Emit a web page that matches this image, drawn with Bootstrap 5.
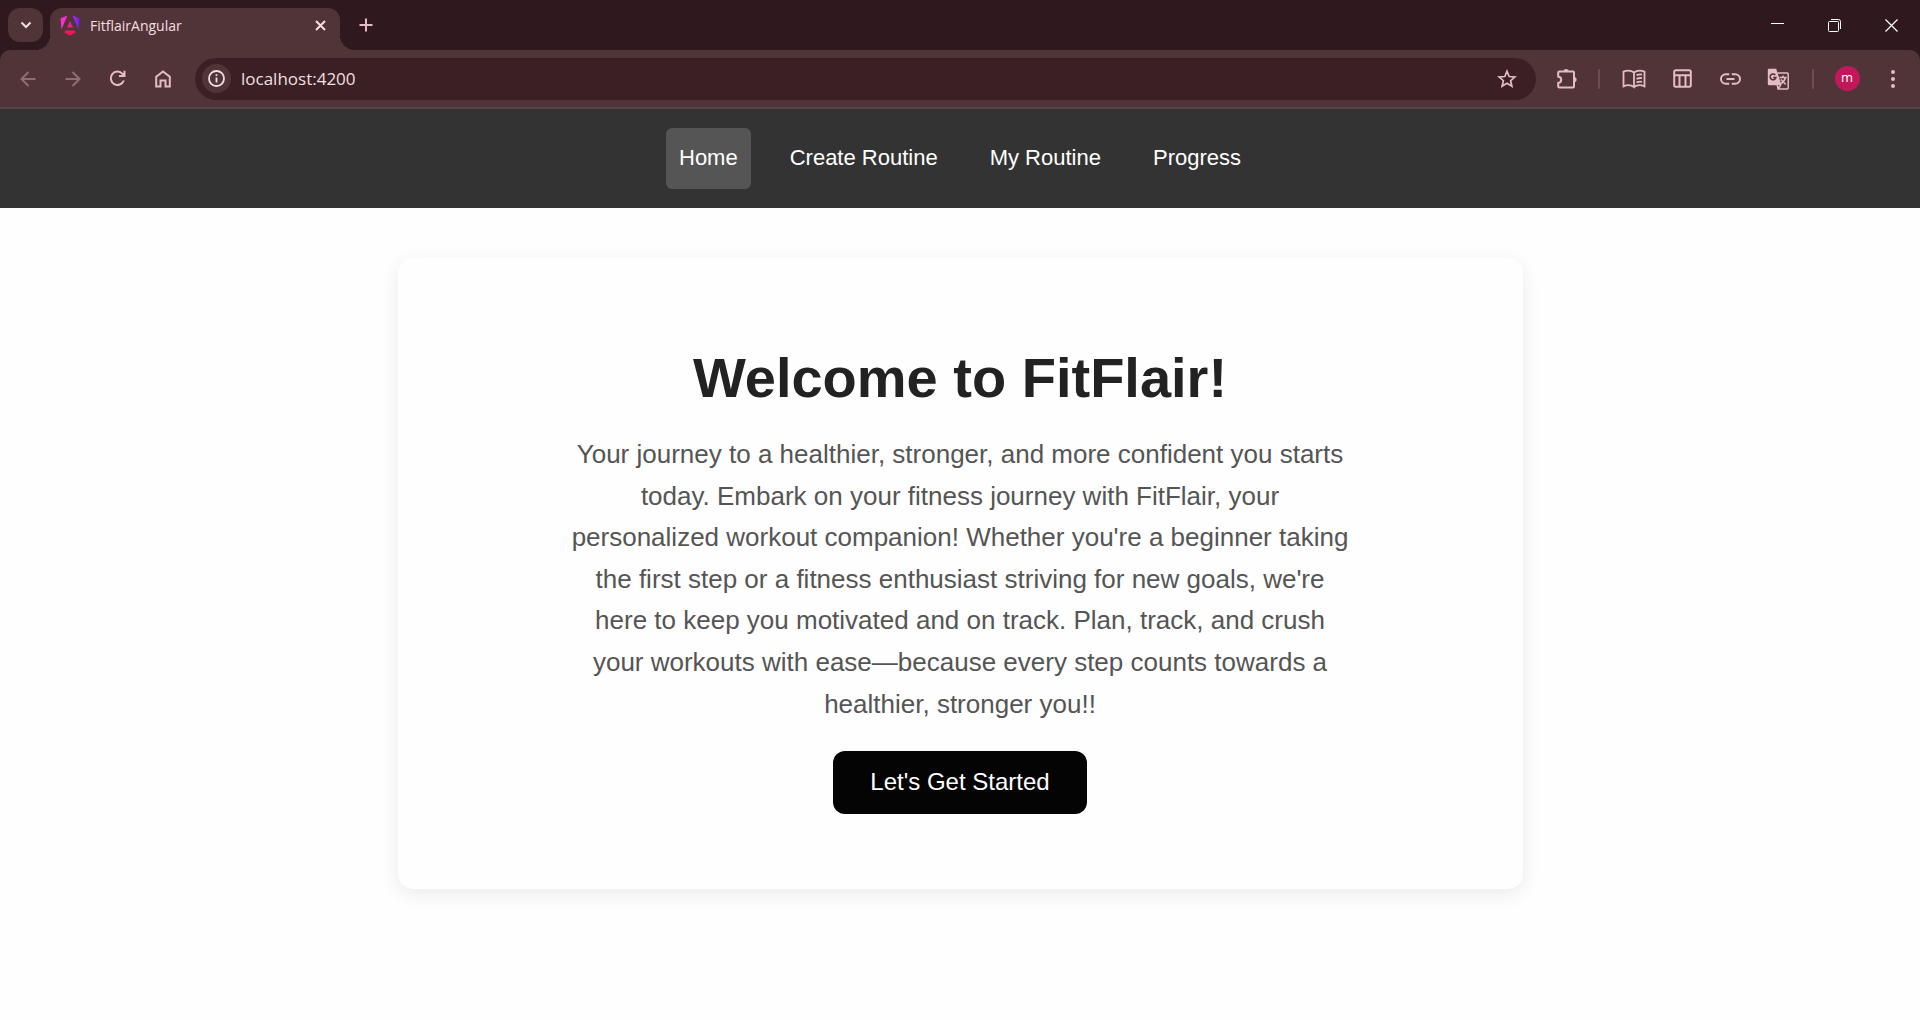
<!DOCTYPE html>
<html lang="en">
<head>
<meta charset="utf-8">
<meta name="viewport" content="width=device-width, initial-scale=1">
<title>FitflairAngular</title>
<link href="https://cdn.jsdelivr.net/npm/bootstrap@5.3.0/dist/css/bootstrap.min.css" rel="stylesheet">
<style>
  :root { --strip: #30191e; --bar: #513438; --field: #3a2024; --ink: #f3dfe1; --pink: #e6bcc2; }
  body { font-family: "Liberation Sans", Arial, sans-serif; background: #fefefe; }
  svg { display: block; fill: none; stroke: currentColor; stroke-width: 2; }
  .browser-ui { background: var(--strip); font-family: "Open Sans", "Noto Sans", sans-serif; color: var(--ink); }
  .icon-button { border: 0; padding: 0; background: transparent; color: var(--pink); display: flex; align-items: center; justify-content: center; flex: none; }
  .icon-button:disabled { color: #8f6d72; }
  .tab-strip { height: 50px; }
  .tab-search { width: 35px; height: 34px; border-radius: 12px; background: var(--bar); color: var(--ink); margin: 8px 7px 0 8px; }
  .browser-tab { position: relative; width: 290px; height: 42px; gap: 10px; margin-top: 8px; padding: 0 10px 8px; border-radius: 12px 12px 0 0; background: var(--bar); font-size: 14px; }
  .browser-tab::before, .browser-tab::after { content: ""; position: absolute; bottom: 0; width: 15px; height: 15px; }
  .browser-tab::before { right: 100%; background: radial-gradient(circle at 0 0, transparent 15px, var(--bar) 15px); }
  .browser-tab::after { left: 100%; background: radial-gradient(circle at 100% 0, transparent 15px, var(--bar) 15px); }
  .tab-close { width: 20px; height: 20px; color: var(--ink); }
  .new-tab { width: 32px; height: 50px; margin-left: 10px; }
  .window-button { width: 57px; height: 50px; color: #fff; }
  .tool-row { height: 59px; padding: 0 5px; background: var(--bar); border-radius: 10px 10px 0 0; border-bottom: 2px solid #554546; }
  .nav-tool { width: 45px; height: 42px; }
  .side-tool { width: 48px; height: 42px; }
  .ext-tool { width: 42px; height: 42px; }
  .profile-tool { width: 46px; height: 42px; }
  .address { height: 42px; margin: 0 10px; padding: 0 7px; border-radius: 21px; background: var(--field); }
  .site-info { width: 29px; height: 29px; border-radius: 50%; background: var(--bar); color: var(--ink); }
  .address input { border: 0; outline: 0; background: transparent; color: var(--ink); font-size: 17px; padding: 0; margin-left: 10px; min-width: 0; }
  .divider { width: 2px; height: 20px; background: #6e4c51; margin: 0 10px; border-radius: 1px; }
  .avatar { width: 25px; height: 25px; border-radius: 50%; background: #c2185b; color: #fff; font-size: 13px; line-height: 23px; }
  .site-nav { background: #333; padding: 19px 0; gap: 26px; }
  .site-nav a { color: #fff; font-size: 22px; line-height: 26px; padding: 17px 13px 18px; border-radius: 6px; text-decoration: none; }
  .site-nav a.active { background: #555; }
  .hero { max-width: 1125px; margin: 50px auto; padding: 86px 172px 75px; border-radius: 15px; background: #fefefe; box-shadow: 0 5px 19px rgba(0,0,0,.08); }
  .hero h1 { font-size: 56px; line-height: 68px; font-weight: 700; color: #222; margin: 0 0 22px; }
  .hero p { font-size: 26px; line-height: 1.6; color: #555; margin: 0 auto 26px; }
  .start-button { background: #040404; color: #fff; font-size: 24px; line-height: 27px; padding: 17px 37px 19px; border: 0; border-radius: 12px; }
</style>
<script src="https://cdn.jsdelivr.net/npm/bootstrap@5.3.0/dist/js/bootstrap.bundle.min.js"></script>
</head>
<body>
<header class="browser-ui">
  <div class="tab-strip d-flex">
    <button class="icon-button tab-search" aria-label="Search tabs"><svg width="12" height="8" viewBox="0 0 12 8"><path d="M1.500 1.500 6 6l4.500-4.500"/></svg></button>
    <div class="browser-tab d-flex align-items-center">
      <svg width="20" height="21" viewBox="0 0 20 21" style="stroke:none">
        <defs><linearGradient id="ng" x1="0" y1="0" x2="1" y2="0"><stop offset="0" stop-color="#b52bf0"/><stop offset="1" stop-color="#6a1cf5"/></linearGradient>
        <linearGradient id="ngb" x1="0" y1="0" x2="0" y2="1"><stop offset="0" stop-color="#e5259e"/><stop offset="1" stop-color="#ff1048"/></linearGradient></defs>
        <path fill="#fa2ccb" d="M7.500.5.500 3.200 1.500 14.500z"/><path fill="url(#ng)" d="M12.500.5l7 2.700-1 11.300z"/>
        <path fill="url(#ngb)" d="M10 6 7 12.500h6zM5.500 15.500h9l1 2L10 20.500l-5.500-3z"/>
      </svg>
      <span class="flex-grow-1 text-truncate">FitflairAngular</span>
      <button class="icon-button tab-close" aria-label="Close tab"><svg width="11" height="11" viewBox="0 0 11 11"><path d="m1 1 9 9M10 1l-9 9"/></svg></button>
    </div>
    <button class="icon-button new-tab" aria-label="New tab"><svg width="14" height="14" viewBox="0 0 14 14"><path d="M7 .5v13M.5 7h13"/></svg></button>
    <div class="d-flex ms-auto">
      <button class="icon-button window-button" aria-label="Minimize"><svg width="13" height="4" viewBox="0 0 13 4" style="stroke-width:1"><path d="M0 .5h13"/></svg></button>
      <button class="icon-button window-button" aria-label="Restore"><svg width="13" height="13" viewBox="0 0 13 13" style="stroke-width:1"><rect x=".5" y="2.500" width="10" height="10" rx="1"/><path d="M3 .5h7.500a2 2 0 0 1 2 2V10"/></svg></button>
      <button class="icon-button window-button" aria-label="Close"><svg width="13" height="13" viewBox="0 0 13 13" style="stroke-width:1.2"><path d="m.5.5 12 12M12.500.5l-12 12"/></svg></button>
    </div>
  </div>
  <div class="tool-row d-flex align-items-center">
    <button class="icon-button nav-tool" disabled aria-label="Back"><svg width="16" height="16" viewBox="0 0 16 16"><path d="M15.500 8H2M8.500 1 1.500 8l7 7"/></svg></button>
    <button class="icon-button nav-tool" disabled aria-label="Forward"><svg width="16" height="16" viewBox="0 0 16 16"><path d="M.5 8H14M7.500 1l7 7-7 7"/></svg></button>
    <button class="icon-button nav-tool" aria-label="Reload"><svg width="17" height="17" viewBox="0 0 17 17"><path d="M14.800 10.500A6.700 6.700 0 1 1 13.500 3.800l2 2.200M15.500.8V6H10"/></svg></button>
    <button class="icon-button nav-tool" aria-label="Home"><svg width="16" height="18" viewBox="0 0 16 18"><path d="M1.200 6.800 8 1.500l6.800 5.300V16.500h-4.300V10.500h-5v6H1.200z"/></svg></button>
    <div class="address d-flex align-items-center flex-grow-1">
      <button class="icon-button site-info" aria-label="View site information"><svg width="17" height="17" viewBox="0 0 17 17" style="stroke-width:1.8"><circle cx="8.500" cy="8.500" r="7.500"/><path d="M8.500 7.500V12.500M8.500 4.300V6.100"/></svg></button>
      <input class="flex-grow-1" type="text" value="localhost:4200" aria-label="Address">
      <button class="icon-button nav-tool" aria-label="Bookmark this page"><svg width="20" height="20" viewBox="0 0 20 20" style="stroke-width:1.700"><path d="m10 2.300 2.200 5.200 5.700.5-4.300 3.700 1.300 5.500-4.900-2.900-4.900 2.900 1.300-5.500L2.100 8l5.700-.5z"/></svg></button>
    </div>
    <button class="icon-button ext-tool" aria-label="Extensions"><svg width="22" height="22" viewBox="0 0 22 22"><path d="M3.500 3.500h13.500q1 0 1 1v14q0 1-1 1h-13.500q-1.300 0-1.300-1.300V15c4-.5 4-6 0-6.500V4.800q0-1.300 1.300-1.300z"/><path fill="currentColor" stroke="none" d="M7.500 3.500a2.600 2.600 0 0 1 5.200 0zM18 9a2.600 2.600 0 0 1 0 5.200z"/></svg></button>
    <span class="divider"></span>
    <button class="icon-button side-tool" aria-label="Reading mode"><svg width="24" height="20" viewBox="0 0 24 20" style="stroke-width:1.800"><path d="M12 18C9 15.800 5 15.800 1.500 17.300V2.700C5 1.200 9 1.200 12 3.500zM12 18c3-2.200 7-2.200 10.500-.7V2.700C19 1.200 15 1.200 12 3.500M14.500 6.200q3-1.200 5.500-.6M14.500 9.800q3-1.200 5.500-.6M14.500 13.400q3-1.200 5.500-.6"/></svg></button>
    <button class="icon-button side-tool" aria-label="Side panel"><svg width="19" height="19" viewBox="0 0 19 19"><rect x="1.200" y="1.200" width="16.600" height="16.600" rx="1.500"/><path d="M1 6.300h17M6.500 6.300V18M12.500 6.300V18"/></svg></button>
    <button class="icon-button side-tool" aria-label="Copy link"><svg width="21" height="12" viewBox="0 0 21 12"><path d="M9.200 1.200H5.800a4.800 4.800 0 0 0 0 9.600h3.400M11.800 1.200h3.400a4.800 4.800 0 0 1 0 9.600h-3.400M6.500 6h8"/></svg></button>
    <button class="icon-button side-tool" aria-label="Translate"><svg width="22" height="22" viewBox="0 0 22 22" style="stroke-width:1.500"><path fill="currentColor" stroke="none" d="M2 .8h7.200l5.300 16.400H2Q.8 17.200.8 16V2Q.8.8 2 .8z"/><path d="M10.500 5h9.700q1 0 1 1v14q0 1-1 1h-9l-1-3.800M12.500 9.500h7.200M16 7.500v2M18.500 9.500q-1 4-5 6.500M13.800 11.500l5 5M10.500 21l3.300-3.800"/><path d="M8.300 7a2.900 2.900 0 1 0 .6 2.500H6.200" stroke="#513438"/></svg></button>
    <span class="divider"></span>
    <button class="icon-button profile-tool" aria-label="Profile"><span class="avatar">m</span></button>
    <button class="icon-button nav-tool" aria-label="Menu"><svg width="4" height="18" viewBox="0 0 4 18" style="stroke:none;fill:currentColor"><circle cx="2" cy="2" r="2"/><circle cx="2" cy="9" r="2"/><circle cx="2" cy="16" r="2"/></svg></button>
  </div>
</header>
<nav class="site-nav d-flex justify-content-center flex-wrap" aria-label="Main">
  <a class="active" href="#home" aria-current="page">Home</a>
  <a href="#create">Create Routine</a>
  <a href="#routine">My Routine</a>
  <a href="#progress">Progress</a>
</nav>
<main class="hero text-center">
  <h1>Welcome to FitFlair!</h1>
  <p>Your journey to a healthier, stronger, and more confident you starts today. Embark on your fitness journey with FitFlair, your personalized workout companion! Whether you're a beginner taking the first step or a fitness enthusiast striving for new goals, we're here to keep you motivated and on track. Plan, track, and crush your workouts with ease—because every step counts towards a healthier, stronger you!!</p>
  <button class="start-button">Let's Get Started</button>
</main>
</body>
</html>
